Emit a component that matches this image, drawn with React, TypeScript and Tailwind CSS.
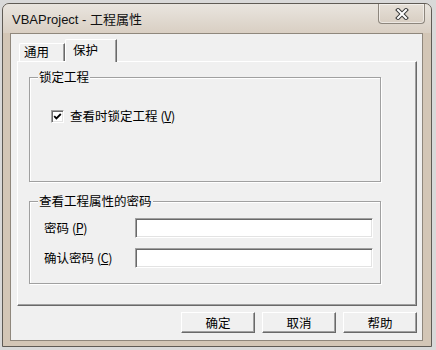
import React from "react";

const cjk = { fontFamily: '"Noto Sans CJK SC", "Liberation Sans", sans-serif' };

function Acc({ k }: { k: string }) {
  return (
    <span className="ml-[3px] tracking-[-0.5px]">
      (<span className="underline underline-offset-[1px]">{k}</span>)
    </span>
  );
}

function Button({ label }: { label: string }) {
  return (
    <div className="w-[74px] h-[21px] flex items-center justify-center bg-[#f0f0f0] border-t border-l border-white border-r border-b border-r-[#696969] border-b-[#696969] shadow-[inset_-1px_-1px_0_#a0a0a0] text-[12.5px] leading-[14px] text-black">
      {label}
    </div>
  );
}

function Input() {
  return (
    <div className="w-[238px] h-[20px] bg-white border-t border-l border-[#a0a0a0] border-r border-b border-r-white border-b-white shadow-[inset_1px_1px_0_#696969,inset_-1px_-1px_0_#e3e3e3]" />
  );
}

export default function App() {
  return (
    <div className="w-[436px] h-[350px] bg-[#d9d9d9] pt-[3px] pl-[2px] overflow-hidden" style={cjk}>
      <div className="w-[430px] h-[344px] rounded-t-[7px] border border-[#5f5b55] bg-[#d3c6b6] flex flex-col overflow-hidden">
        {/* title bar */}
        <div className="h-[29px] flex items-start justify-between bg-gradient-to-b from-[#e9e5df] to-[#d9cfc3] pl-[9px] pr-[6px]">
          <div className="pt-[8px] text-[13px] leading-[14px] text-[#111]" style={{ fontFamily: '"Liberation Sans", "Noto Sans CJK SC", sans-serif' }}>
            VBAProject - <span style={cjk}>工程属性</span>
          </div>
          <div className="w-[47px] h-[20px] rounded-b-[4px] border border-t-0 border-[#8d867d] bg-gradient-to-b from-[#e6e0d8] to-[#d8cec2] flex items-center justify-center shadow-[inset_0_0_0_1px_rgba(255,255,255,0.5)]">
            <svg width="14" height="12" viewBox="0 0 14 12">
              <path d="M3 2 L11 10 M11 2 L3 10" stroke="#3a3a3a" strokeWidth="4" strokeLinecap="square" />
              <path d="M3 2 L11 10 M11 2 L3 10" stroke="#ffffff" strokeWidth="2" strokeLinecap="square" />
            </svg>
          </div>
        </div>
        {/* client */}
        <div className="ml-[7px] w-[413px] h-[308px] border border-[#8f877c] bg-[#f0f0f0] pt-[5px] pl-[6px] flex flex-col">
          {/* tabs */}
          <div className="h-[22px] flex items-end">
            <div className="ml-[2px] w-[46px] h-[18px] border-t border-l border-white border-r border-r-[#696969] shadow-[inset_-1px_0_0_#a0a0a0] rounded-tl-[2px] text-[12.5px] leading-[14px] pl-[4px] pt-[1px] text-black">
              通用
            </div>
            <div className="relative z-10 -mb-[1px] w-[52px] h-[23px] bg-[#f0f0f0] border-t border-l border-white border-r border-r-[#696969] shadow-[inset_-1px_0_0_#a0a0a0] rounded-tl-[2px] text-[12.5px] leading-[14px] pl-[7px] pt-[3px] text-black">
              保护
            </div>
          </div>
          {/* panel */}
          <div className="w-[400px] h-[245px] border-t border-l border-white border-r border-b border-r-[#696969] border-b-[#696969] shadow-[inset_-1px_-1px_0_#a0a0a0] pl-[11px] pt-[15px] flex flex-col">
            {/* group 1 */}
            <div className="relative w-[352px] h-[105px] border border-[#a0a0a0] shadow-[1px_1px_0_#fff,inset_1px_1px_0_#fff] pl-[21px] pt-[31px]">
              <span className="absolute -top-[8px] left-[8px] bg-[#f0f0f0] px-[1px] text-[12.5px] leading-[14px] text-black">锁定工程</span>
              <div className="flex items-center gap-[6px] text-[12.5px] leading-[14px] text-black">
                <div className="w-[13px] h-[13px] bg-white border-t border-l border-[#a0a0a0] border-r border-b border-r-white border-b-white shadow-[inset_1px_1px_0_#696969,inset_-1px_-1px_0_#e3e3e3] flex items-center justify-center">
                  <svg width="9" height="9" viewBox="0 0 9 9">
                    <path d="M1.2 4.2 L3.4 6.4 L7.8 2" stroke="#000" strokeWidth="1.8" fill="none" />
                  </svg>
                </div>
                <span>
                  查看时锁定工程<Acc k="V" />
                </span>
              </div>
            </div>
            {/* group 2 */}
            <div className="relative mt-[19px] w-[352px] h-[83px] border border-[#a0a0a0] shadow-[1px_1px_0_#fff,inset_1px_1px_0_#fff] pl-[14px] pt-[16px] flex flex-col gap-[10px]">
              <span className="absolute -top-[8px] left-[8px] bg-[#f0f0f0] px-[1px] text-[12.5px] leading-[14px] text-black">查看工程属性的密码</span>
              <div className="flex items-center text-[12.5px] leading-[14px] text-black">
                <div className="w-[91px]">
                  密码<Acc k="P" />
                </div>
                <Input />
              </div>
              <div className="flex items-center text-[12.5px] leading-[14px] text-black">
                <div className="w-[91px]">
                  确认密码<Acc k="C" />
                </div>
                <Input />
              </div>
            </div>
          </div>
          {/* buttons */}
          <div className="mt-[6px] w-[400px] flex justify-end gap-[7px]">
            <Button label="确定" />
            <Button label="取消" />
            <Button label="帮助" />
          </div>
        </div>
      </div>
    </div>
  );
}
